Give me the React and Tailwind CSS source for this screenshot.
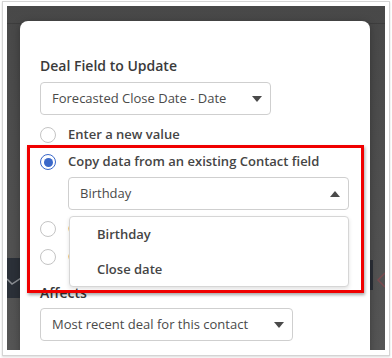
import React from 'react'

const font = { fontFamily: '"Open Sans", "Liberation Sans", sans-serif' }

function Caret({ up = false }) {
    return (
        <svg width="10" height="6" viewBox="0 0 10 6" className="shrink-0">
            {up ? <path d="M0 6 L5 0 L10 6 Z" fill="#4a4a4a" /> : <path d="M0 0 L10 0 L5 6 Z" fill="#4a4a4a" />}
        </svg>
    )
}

function Select({ value, width, up, className = '' }) {
    return (
        <div
            className={`flex h-[33px] items-center justify-between rounded-[4px] border border-[#cfcfcf] bg-white pl-[11px] pr-[8px] text-[13px] text-[#4a4a4a] ${className}`}
            style={{ width }}
        >
            <span>{value}</span>
            <Caret up={up} />
        </div>
    )
}

function Radio({ checked, label }) {
    return (
        <div className="flex h-[20px] items-center">
            {checked ? (
                <span className="flex h-[16px] w-[16px] items-center justify-center rounded-full border-[1.5px] border-[#3a68c9] bg-white">
                    <span className="h-[9px] w-[9px] rounded-full bg-[#3a68c9]" />
                </span>
            ) : (
                <span className="h-[16px] w-[16px] rounded-full border border-[#c4c4c4] bg-white" />
            )}
            <span className="ml-[12px] text-[13px] font-semibold text-[#454545]">{label}</span>
        </div>
    )
}

export default function App() {
    return (
        <div className="h-[358px] w-[392px] overflow-hidden bg-white" style={font}>
            <div className="ml-[2px] mt-[1px] h-[355px] w-[388px] border border-[#d4d4d4] p-[4px] shadow-[0_1px_2px_rgba(0,0,0,0.15)]">
                <div className="relative h-[344px] w-[378px] overflow-hidden bg-gradient-to-b from-[#484848] to-[#555555]">
                    {/* page behind the overlay */}
                    <div className="h-[18px] border-b border-[#3d3d3d]" />
                    <div className="absolute left-0 top-[252px] h-[40px] w-[14px] bg-[#2b3038]">
                        <svg width="14" height="40" viewBox="0 0 14 40">
                            <path d="M0 21 L5 26 L14 20" stroke="#8c8f94" strokeWidth="1.5" fill="none" />
                        </svg>
                    </div>
                    <div className="absolute left-[363px] top-[254px] h-[30px] w-[3px] bg-[#2c3038]" />
                    <svg className="absolute left-[369px] top-[266px]" width="10" height="16" viewBox="0 0 10 16">
                        <path d="M9 1 L2 8 L9 15" stroke="#7a4a4f" strokeWidth="1.5" fill="none" />
                    </svg>

                    {/* modal */}
                    <div className="absolute left-[13px] top-[15px] h-[360px] w-[350px] rounded-t-[8px] bg-white px-[20px] pt-[35px] shadow-[0_2px_8px_rgba(0,0,0,0.3)]">
                        <div className="h-[20px] text-[14px] font-semibold leading-[20px] text-[#3a3a3a]">Deal Field to Update</div>
                        <Select value="Forecasted Close Date - Date" width={231} className="mt-[6px]" />

                        <div className="mt-[10px] flex flex-col gap-[7px]">
                            <Radio label="Enter a new value" />
                            <Radio checked label="Copy data from an existing Contact field" />
                        </div>

                        <div className="relative z-10 ml-[28px] mt-[5px]">
                            <Select value="Birthday" width={281} up />
                            <div className="absolute left-[1px] top-[39px] flex h-[71px] w-[280px] flex-col rounded-[4px] border border-[#d6d6d6] bg-white pl-[27px] pt-[6px] text-[13px] font-semibold text-[#454545] shadow-[0_2px_4px_rgba(0,0,0,0.12)]">
                                <div className="flex h-[24px] items-center">Birthday</div>
                                <div className="mt-[11px] flex h-[24px] items-center">Close date</div>
                            </div>
                        </div>

                        <div className="mt-[9px] flex flex-col gap-[8px]">
                            <Radio label="Calculate a new date" />
                            <Radio label="Clear the field value" />
                        </div>

                        <div className="mt-[16px] h-[20px] text-[14px] font-semibold leading-[20px] text-[#3a3a3a]">Affects</div>
                        <Select value="Most recent deal for this contact" width={253} className="mt-[5px]" />

                        {/* annotation box */}
                        <div className="absolute left-[7px] top-[124px] z-20 h-[148px] w-[337px] border-[3px] border-[#f00000] shadow-[1px_2px_3px_rgba(0,0,0,0.35)]" />
                    </div>
                </div>
            </div>
        </div>
    )
}
